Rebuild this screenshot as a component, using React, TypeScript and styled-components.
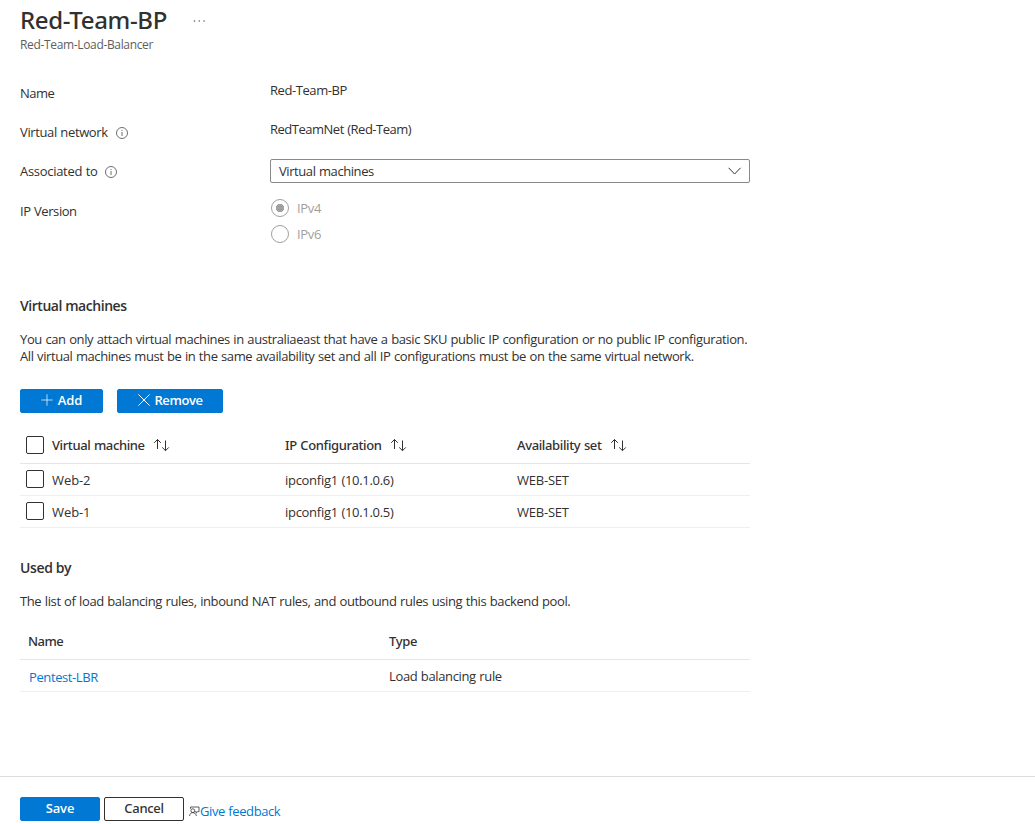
import React from "react";
import styled, { createGlobalStyle, css } from "styled-components";

const GlobalStyle = createGlobalStyle`
  * { box-sizing: border-box; }
  body {
    margin: 0;
    background: #fff;
    color: #323130;
    font-family: "Open Sans", "Noto Sans", sans-serif;
    font-size: 13px;
    line-height: 20px;
  }
`;

/* Text run with optional tracking */
const Text = styled.span<{ $track?: number }>`
  letter-spacing: ${(p) => p.$track ?? -0.31}px;
  word-spacing: 0.5px;
  white-space: nowrap;
`;

const Page = styled.div`
  display: flex;
  flex-direction: column;
  height: 824px;
  overflow: hidden;
`;

const Content = styled.main`
  flex: 1;
  width: 750px;
  padding: 4px 0 0 20px;
`;

const TitleRow = styled.div`
  display: flex;
  align-items: center;
  height: 32px;
`;

const Title = styled.h1`
  margin: 0;
  width: 173px;
  font: 500 24px/32px "Noto Sans", sans-serif;
  letter-spacing: -0.33px;
  white-space: nowrap;
`;

const Subtitle = styled.div`
  padding-top: 1px;
  font-size: 12px;
  line-height: 16px;
  letter-spacing: -0.34px;
  color: #605e5c;
`;

const Fields = styled.div`
  margin-top: 21px;
`;

const Field = styled.div<{ $offset?: number }>`
  display: grid;
  grid-template-columns: 250px 480px;
  height: 39px;
  margin-top: ${(p) => p.$offset ?? 0}px;
`;

const Label = styled.div`
  display: flex;
  align-items: center;
  align-self: start;
  gap: 8px;
  margin-top: 9px;
  height: 20px;
`;

const Value = styled.div`
  padding-top: 6px;
`;

const Select = styled.div`
  display: flex;
  align-items: center;
  justify-content: space-between;
  height: 24px;
  margin-top: 7px;
  padding: 0 7px 0 8px;
  border: 1px solid #8a8886;
  border-radius: 2px;
`;

const RadioGroup = styled.div`
  display: flex;
  flex-direction: column;
  gap: 8px;
  padding: 7px 0 0 1px;
`;

const RadioOption = styled.div`
  display: flex;
  align-items: center;
  gap: 8px;
  height: 18px;
  color: #a19f9d;
`;

const RadioMark = styled.span<{ $checked?: boolean }>`
  width: 18px;
  height: 18px;
  border: 1px solid #a19f9d;
  border-radius: 50%;
  ${(p) =>
    p.$checked &&
    css`
      background: radial-gradient(circle, #a19f9d 3.8px, transparent 4.4px);
    `}
`;

const SectionTitle = styled.h2<{ $top: number; $track: number }>`
  margin: ${(p) => p.$top}px 0 0;
  font-size: 14px;
  font-weight: 600;
  line-height: 20px;
  letter-spacing: ${(p) => p.$track}px;
`;

const Description = styled.p`
  margin: 15px 0 0;
  line-height: 17px;
`;

const Line = styled(Text)`
  display: block;
`;

const Toolbar = styled.div`
  display: flex;
  gap: 14px;
  margin-top: 24px;
`;

const Button = styled.button<{ $width: number; $plain?: boolean; $track?: number }>`
  display: flex;
  align-items: center;
  justify-content: center;
  gap: 5px;
  width: ${(p) => p.$width}px;
  height: 24px;
  padding: 0 0 2px;
  border: 1px solid ${(p) => (p.$plain ? "#323130" : "#0078d4")};
  border-radius: 2px;
  background: ${(p) => (p.$plain ? "#fff" : "#0078d4")};
  color: ${(p) => (p.$plain ? "#323130" : "#fff")};
  font: ${(p) => (p.$plain ? "500" : "600")} 13px/20px ${(p) => (p.$plain ? '"Noto Sans"' : '"Open Sans"')}, sans-serif;
  letter-spacing: ${(p) => p.$track ?? -0.2}px;
`;

const Table = styled.div<{ $top: number }>`
  margin-top: ${(p) => p.$top}px;
`;

const machineColumns = css`
  grid-template-columns: 26px 233px 232px 1fr;
  padding-left: 6px;
`;

const ruleColumns = css`
  grid-template-columns: 361px 1fr;
  padding-left: 8px;
`;

const HeaderRow = styled.div<{ $rules?: boolean }>`
  display: grid;
  align-items: center;
  height: 37px;
  border-bottom: 1px solid #e6e6e6;
  font-family: "Noto Sans", sans-serif;
  font-weight: 500;
  ${(p) => (p.$rules ? ruleColumns : machineColumns)}
`;

const Row = styled.div<{ $rules?: boolean }>`
  display: grid;
  align-items: start;
  height: 32px;
  padding-top: 6px;
  border-bottom: 1px solid #efefef;
  ${(p) => (p.$rules ? ruleColumns : machineColumns)}
`;

const HeaderCell = styled.div`
  display: flex;
  align-items: center;
  gap: 8px;
`;

const Checkbox = styled.span`
  width: 18px;
  height: 18px;
  border: 1px solid #323130;
  border-radius: 2px;
`;

const RuleLink = styled.a`
  padding: 1px 0 0 1px;
  color: #0078d4;
`;

const Footer = styled.footer`
  display: flex;
  align-items: flex-start;
  gap: 4px;
  height: 48px;
  padding: 20px 0 0 20px;
  border-top: 1px solid #dcdcdc;
`;

const Feedback = styled.a`
  display: flex;
  align-items: center;
  margin: 4px 0 0 1px;
  height: 20px;
  color: #0078d4;
`;

const InfoGlyph = styled.svg`
  margin-top: 1px;
`;

const MoreGlyph = styled.svg`
  margin-top: 2px;
`;

const InfoIcon = () => (
  <InfoGlyph width="12" height="12" viewBox="0 0 12 12" fill="none" stroke="#605e5c">
    <circle cx="6" cy="6" r="5.5" strokeWidth="0.9" />
    <path d="M6 5v4" strokeWidth="0.9" />
    <path d="M6 3v1" strokeWidth="0.9" />
  </InfoGlyph>
);

const ChevronIcon = () => (
  <svg width="14" height="8" viewBox="0 0 14 8" fill="none" stroke="#323130" strokeWidth="1">
    <path d="M0.6 0.8L6.6 7L12.6 0.8" />
  </svg>
);

const SortIcon = () => (
  <svg width="17" height="14" viewBox="0 0 17 14" fill="none" stroke="#323130" strokeWidth="1">
    <path d="M4.5 11V1.5M1.2 4.8L4.5 1.5L7.8 4.8" />
    <path d="M12.5 2.5V12.5M9.2 9.4L12.5 12.7L15.8 9.4" />
  </svg>
);

const PlusIcon = () => (
  <svg width="12" height="12" viewBox="0 0 12 12" stroke="#fff" strokeWidth="0.7">
    <path d="M6 0.3V11.7M0.3 6H11.7" />
  </svg>
);

const CrossIcon = () => (
  <svg width="12" height="12" viewBox="0 0 12 12" stroke="#fff" strokeWidth="1">
    <path d="M0.4 0.4L11.6 11.6M11.6 0.4L0.4 11.6" />
  </svg>
);

const MoreIcon = () => (
  <MoreGlyph width="13" height="4" viewBox="0 0 13 4" fill="#605e5c">
    <circle cx="1.5" cy="2" r="0.8" />
    <circle cx="6.3" cy="2" r="0.8" />
    <circle cx="11.1" cy="2" r="0.8" />
  </MoreGlyph>
);

const FeedbackIcon = () => (
  <svg width="11" height="11" viewBox="0 0 11 11" fill="none" stroke="#323130" strokeWidth="0.8">
    <path d="M1.5 2.8V1H10V5.6H8.8L7.2 7.2V5.6H6.2" />
    <circle cx="3.8" cy="4.7" r="1.9" />
    <path d="M0.5 10C0.9 7.8 2.1 6.6 3.8 6.6S6.9 7.8 7.4 10" />
  </svg>
);

const machines = [
  { name: "Web-2", ip: "ipconfig1 (10.1.0.6)", set: "WEB-SET" },
  { name: "Web-1", ip: "ipconfig1 (10.1.0.5)", set: "WEB-SET" },
];

export default function App() {
  return (
    <Page>
      <GlobalStyle />
      <Content>
        <TitleRow>
          <Title>Red-Team-BP</Title>
          <MoreIcon />
        </TitleRow>
        <Subtitle>Red-Team-Load-Balancer</Subtitle>

        <Fields>
          <Field>
            <Label><Text $track={-0.5}>Name</Text></Label>
            <Value><Text $track={-0.43}>Red-Team-BP</Text></Value>
          </Field>
          <Field>
            <Label><Text $track={-0.37}>Virtual network</Text><InfoIcon /></Label>
            <Value><Text $track={-0.49}>RedTeamNet (Red-Team)</Text></Value>
          </Field>
          <Field>
            <Label><Text $track={-0.3}>Associated to</Text><InfoIcon /></Label>
            <Select><Text $track={-0.42}>Virtual machines</Text><ChevronIcon /></Select>
          </Field>
          <Field $offset={1}>
            <Label><Text $track={-0.43}>IP Version</Text></Label>
            <RadioGroup>
              <RadioOption><RadioMark $checked /><Text $track={-0.3}>IPv4</Text></RadioOption>
              <RadioOption><RadioMark /><Text $track={-0.3}>IPv6</Text></RadioOption>
            </RadioGroup>
          </Field>
        </Fields>

        <SectionTitle $top={65} $track={-0.45}>Virtual machines</SectionTitle>
        <Description>
          <Line $track={-0.387}>You can only attach virtual machines in australiaeast that have a basic SKU public IP configuration or no public IP configuration.</Line>
          <Line $track={-0.404}>All virtual machines must be in the same availability set and all IP configurations must be on the same virtual network.</Line>
        </Description>

        <Toolbar>
          <Button $width={83} $track={-0.09}><PlusIcon />Add</Button>
          <Button $width={106} $track={-0.43}><CrossIcon />Remove</Button>
        </Toolbar>

        <Table $top={14}>
          <HeaderRow>
            <Checkbox />
            <HeaderCell><Text $track={-0.38}>Virtual machine</Text><SortIcon /></HeaderCell>
            <HeaderCell><Text $track={-0.36}>IP Configuration</Text><SortIcon /></HeaderCell>
            <HeaderCell><Text $track={-0.36}>Availability set</Text><SortIcon /></HeaderCell>
          </HeaderRow>
          {machines.map((m) => (
            <Row key={m.name}>
              <Checkbox />
              <Text $track={-0.08}>{m.name}</Text>
              <Text $track={-0.29}>{m.ip}</Text>
              <Text $track={-0.22}>{m.set}</Text>
            </Row>
          ))}
        </Table>

        <SectionTitle $top={30} $track={-0.38}>Used by</SectionTitle>
        <Description>
          <Line $track={-0.384}>The list of load balancing rules, inbound NAT rules, and outbound rules using this backend pool.</Line>
        </Description>

        <Table $top={13}>
          <HeaderRow $rules>
            <Text $track={-0.5}>Name</Text>
            <Text $track={-0.36}>Type</Text>
          </HeaderRow>
          <Row $rules>
            <RuleLink><Text $track={-0.4}>Pentest-LBR</Text></RuleLink>
            <Text $track={-0.36}>Load balancing rule</Text>
          </Row>
        </Table>
      </Content>

      <Footer>
        <Button $width={80} $track={-0.16}>Save</Button>
        <Button $width={80} $plain $track={-0.3}>Cancel</Button>
        <Feedback><FeedbackIcon /><Text $track={-0.41}>Give feedback</Text></Feedback>
      </Footer>
    </Page>
  );
}
